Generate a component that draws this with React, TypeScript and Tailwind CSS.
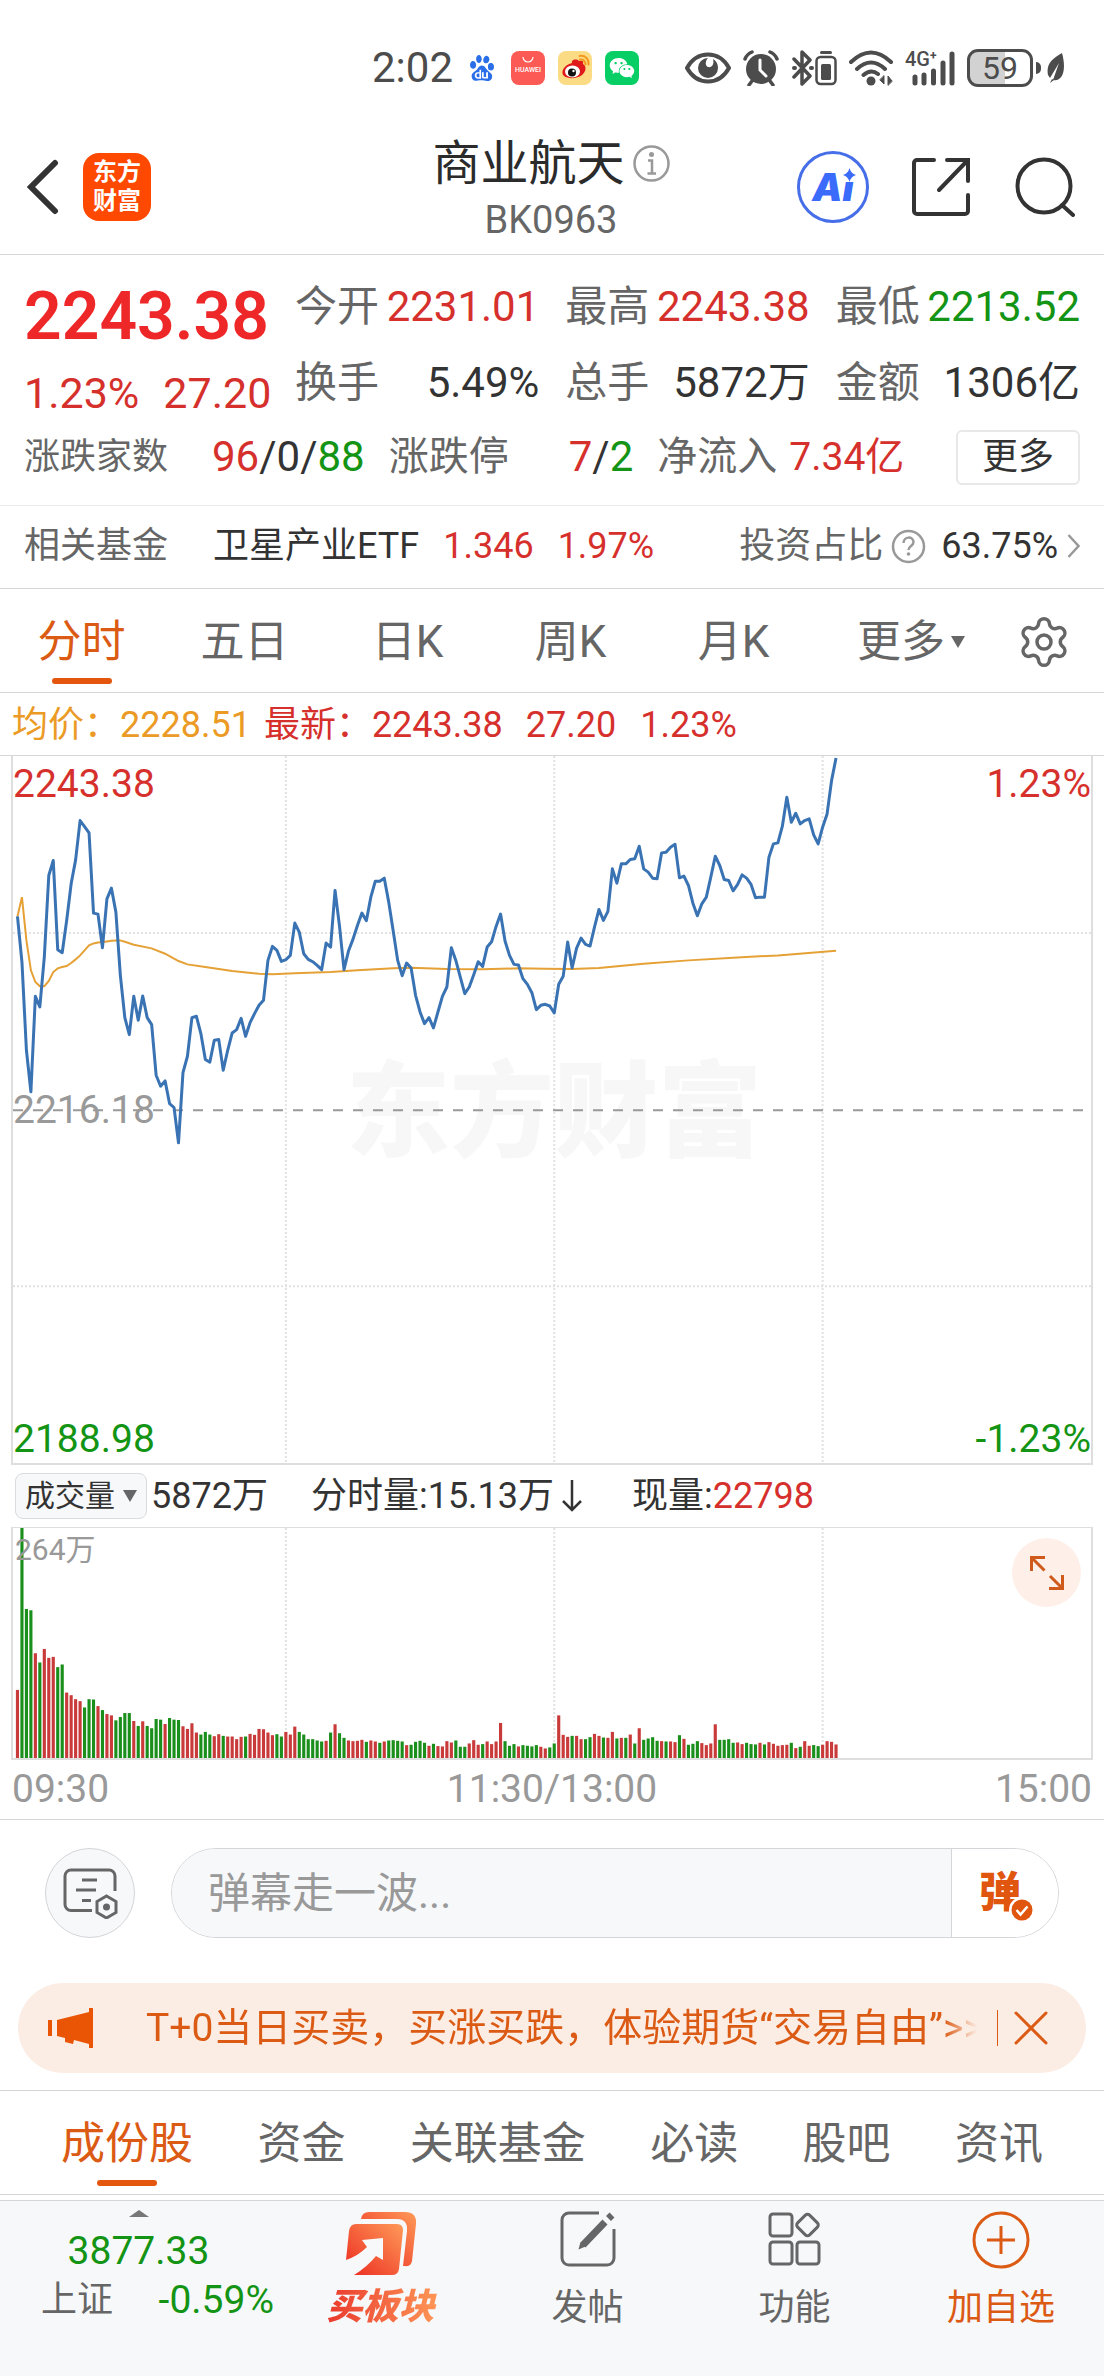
import type { ReactNode } from "react";
import { SiBaidu } from "react-icons/si";
import { AiFillWechat } from "react-icons/ai";
import { Settings } from "lucide-react";

/* One sample per trading minute; the vertical axis runs from 46 (day high) to 2170 (day low limit). */
const PRICE = [
  528, 665, 930, 1055, 768, 800, 650, 405, 360, 628, 637, 540, 430, 358, 240, 258, 277, 518, 521, 622,
  475, 443, 515, 705, 832, 883, 768, 840, 767, 832, 853, 1005, 1038, 1022, 1090, 1102, 1208, 997, 948, 832,
  828, 880, 958, 966, 900, 898, 990, 930, 878, 868, 834, 888, 847, 820, 795, 780, 660, 618, 630, 663,
  658, 645, 548, 575, 640, 657, 664, 675, 688, 608, 620, 450, 558, 688, 632, 597, 555, 518, 541, 470,
  422, 422, 413, 485, 572, 660, 706, 668, 683, 765, 815, 850, 832, 863, 815, 768, 740, 622, 660, 710,
  760, 740, 703, 664, 678, 620, 604, 558, 521, 602, 645, 672, 674, 715, 732, 757, 808, 795, 792, 797,
  818, 732, 708, 605, 683, 623, 593, 612, 617, 560, 507, 540, 513, 385, 428, 370, 370, 357, 355, 317,
  385, 395, 413, 415, 337, 335, 320, 311, 412, 407, 435, 488, 526, 490, 470, 410, 347, 375, 417, 420,
  451, 432, 403, 413, 432, 472, 470, 470, 350, 310, 307, 257, 170, 245, 218, 250, 240, 235, 283, 310,
  260, 220, 120, 52,
];

const AVERAGE: [number, number][] = [
  [0, 528], [1, 470], [2, 600], [3, 690], [4, 725], [5, 738], [6, 738], [7, 722], [8, 695], [9, 684],
  [10, 680], [11, 677], [12, 668], [13, 657], [14, 645], [15, 630], [16, 615], [17, 609], [18, 606],
  [19, 605], [20, 603], [21, 601], [22, 600], [23, 600], [24, 604], [26, 613], [30, 624], [33, 640],
  [36, 662], [38, 672], [42, 680], [48, 692], [54, 700], [57, 702], [62, 699], [70, 695], [76, 690],
  [84, 684], [88, 682], [96, 686], [104, 687], [112, 684], [118, 685], [124, 686], [130, 683],
  [140, 670], [150, 660], [160, 652], [170, 645], [183, 631],
];

/* Top edge of each volume bar above a base of 1018; negative marks a falling minute. */
const VOLUME = [
  812, -322, -567, -571, 701, -729, 688, 715, 712, -743, -735, 820, 828, 840, 846, -865, -840, -841, 861, -873,
  885, 889, -904, -894, -882, -882, 906, -921, 907, -921, -928, -900, -902, 915, -897, -902, -903, 922, 930, 913,
  941, -947, -939, -947, 952, 946, -951, 953, 953, 961, 954, -953, 945, 948, 930, 931, 941, 949, -946, -953,
  939, 947, 923, -939, -947, -961, -961, -965, -968, 966, -941, 916, -943, -957, 965, 967, 966, 963, -969, 965,
  968, -972, 968, -965, -964, -966, -968, 979, -978, -969, -966, -972, 981, -975, 982, 983, 967, 971, -965, -984,
  -984, 974, 964, 978, -976, 968, 976, 968, 912, -967, -981, -976, 983, -979, -981, -983, -979, 984, 989, -986,
  -974, 889, 948, 954, -951, 951, 961, -961, -955, 945, 951, -956, 957, 939, -959, 957, -957, 947, -974, 928,
  -963, -959, -955, -966, 967, -968, 968, 970, -949, 960, -978, -975, -967, 973, 979, 974, 916, -963, -963, -961,
  -972, 971, 976, -972, -976, -977, 972, -977, 970, 975, 981, 979, 978, -972, 988, -984, 967, 981, -979, -982,
  978, 967, 969, 977,
];
const VOLUME_BASE = 1018;

const RED = "text-[#d6302d]";
const GREEN = "text-[#149414]";

function StatusBar() {
  return (
    <div className="flex h-[104px] items-center justify-end pt-8 pr-[39px] text-[#4c4c4c]">
      <span className="text-[42px] leading-none">2:02</span>
      <SiBaidu className="ml-4 size-[26px] text-[#2a6fe8]" />
      <div className="ml-4 flex size-[34px] flex-col items-center rounded-lg bg-[#fb5a55] pt-[5px] text-white">
        <svg width="12" height="7" viewBox="0 0 12 7" fill="none" stroke="currentColor" strokeWidth="1.2">
          <path d="M1 1a5 5 0 0 0 10 0" />
        </svg>
        <span className="mt-1 text-[7px] leading-none font-medium">HUAWEI</span>
      </div>
      <svg className="ml-[13px] size-[34px]" viewBox="0 0 34 34">
        <rect width="34" height="34" rx="8" fill="#fbdc84" />
        <path d="M14 12c-1-3 4-5 7-2 3-1 5 0 4 3 4 2 3 8-1 11-5 4-14 4-18 1-4-4 0-11 8-13z" fill="#e01a1a" />
        <ellipse cx="14.500" cy="20.500" rx="7.500" ry="6" fill="#fff" />
        <circle cx="14" cy="21.500" r="4" fill="#111" />
        <circle cx="15.500" cy="20" r="1.200" fill="#fff" />
        <path d="M22 8.500c3-.5 5.500 1.500 5.500 5M21.500 5c5.500-1 9.500 3 9 8.500" fill="none" stroke="#f49a1f" strokeWidth="2" strokeLinecap="round" />
      </svg>
      <div className="ml-[13px] flex size-[34px] items-center justify-center rounded-lg bg-[#08ce66]">
        <AiFillWechat className="size-7 text-white" />
      </div>
      <svg className="ml-[46px] h-8 w-[46px]" viewBox="0 0 46 32">
        <path d="M2 16C12 -2 34 -2 44 16C34 34 12 34 2 16z" fill="none" stroke="currentColor" strokeWidth="4" strokeLinejoin="round" />
        <path d="M23 6a10 10 0 1 0 10 10c0-4-2-7.500-5-9c1.500 5-1 9-5 8c-3-1-3-6 0-9z" fill="currentColor" />
      </svg>
      <svg className="ml-3 size-9" viewBox="0 0 36 36" fill="none" stroke="currentColor">
        <circle cx="18" cy="19" r="15" fill="currentColor" stroke="none" />
        <path d="M2 9q2-5 7-7M34 9q-2-5-7-7M9 31l-3 4M27 31l3 4" strokeWidth="3.500" strokeLinecap="round" />
        <path d="M17 10v10l6 6" stroke="#fff" strokeWidth="3" strokeLinecap="round" />
      </svg>
      <svg className="ml-3 h-9 w-6" viewBox="0 0 24 36" fill="none" stroke="currentColor" strokeWidth="3.500" strokeLinejoin="round" strokeLinecap="round">
        <path d="m3 9 16 17-8 8V2l8 8L3 27" />
        <path d="M3 18h1M20 18h1" strokeWidth="4" />
      </svg>
      <svg className="h-9 w-[22px]" viewBox="0 0 22 36">
        <rect x="5" y="1" width="12" height="3" rx="1.500" fill="currentColor" />
        <rect x="1.500" y="7" width="19" height="27" rx="4" fill="none" stroke="currentColor" strokeWidth="2.500" />
        <rect x="6" y="14" width="10" height="16" rx="1.500" fill="currentColor" />
      </svg>
      <svg className="ml-3 h-9 w-11" viewBox="0 0 44 36" fill="none" stroke="currentColor" strokeWidth="4" strokeLinecap="round">
        <path d="M2 12Q22 -7 42 12M8 19Q22 6 36 19M14.500 25Q22 18.500 29 24" />
        <circle cx="22" cy="31" r="4.500" fill="currentColor" stroke="none" />
        <path d="M35 26v8l-4-4zM39 35v-9l4 5z" fill="currentColor" strokeWidth="1" />
      </svg>
      <div className="relative ml-3 h-9 w-[50px]">
        <svg className="size-full" viewBox="0 0 50 36" stroke="currentColor" strokeWidth="5" strokeLinecap="round">
          <path d="M10 33v-6M19 33v-8M28.500 33v-12M38 33v-20M47 33V4" />
        </svg>
        <span className="absolute top-0 left-0 text-[20px] leading-[18px] font-medium">4G<sup className="text-xs font-bold">+</sup></span>
      </div>
      <div className="ml-3 flex h-[38px] w-[66px] items-center justify-center rounded-[11px] border-[3px] border-current bg-[linear-gradient(90deg,#d2d2d2_59%,#fff_59%)] text-[32px] leading-none">
        59
      </div>
      <span className="ml-[3px] h-3 w-[5px] rounded-r-md bg-current" />
      <svg className="ml-[6px] h-[30px] w-[18px]" viewBox="0 0 18 30" fill="currentColor">
        <path d="M15 0C4 6-1 12 1 22l2 3L12 10 6 27c9 2 14-9 9-27zM5 26l-2 4 4-3z" />
      </svg>
    </div>
  );
}

function Header() {
  return (
    <header className="grid h-[151px] grid-cols-[1fr_auto_1fr] items-center border-b border-[#d6d6d6] pt-4 pr-[29px] pl-[27px]">
      <div className="flex items-center">
        <button aria-label="返回" className="w-14 text-[#333]">
          <svg width="32" height="56" viewBox="0 0 32 56" fill="none" stroke="currentColor" strokeWidth="6" strokeLinecap="round" strokeLinejoin="miter">
            <path d="M28 4 4 28l24 24" />
          </svg>
        </button>
        <div className="flex size-[68px] flex-col items-center justify-center rounded-2xl bg-[#ff4800] text-[24px] leading-[29px] font-bold text-white">
          <span>东方</span>
          <span>财富</span>
        </div>
      </div>
      <div className="flex flex-col items-center pt-[5px]">
        <div className="flex items-center gap-2">
          <h1 className="text-[48px] leading-[56px] text-[#2b2b2b]">商业航天</h1>
          <button aria-label="说明" className="text-[#999]">
            <svg width="37" height="37" viewBox="0 0 37 37" fill="none" stroke="currentColor" strokeWidth="2.500">
              <circle cx="18.500" cy="18.500" r="17" />
              <circle cx="18.500" cy="9.500" r="2.500" fill="currentColor" stroke="none" />
              <path d="M15 15.500h4v13M14.500 28.500h8.500" />
            </svg>
          </button>
        </div>
        <span className="mt-1 text-[38px] leading-[48px] text-[#666]">BK0963</span>
      </div>
      <div className="flex items-center justify-end text-[#333]">
        <button aria-label="AI 助手" className="relative flex size-[72px] items-center justify-center rounded-full border-[3px] border-[#456ee8] font-[Inter] text-[38px] leading-none font-black text-[#3a6bfb] italic">
          Ai
          <svg className="absolute top-[14px] right-[10px] bg-white" width="13" height="14" viewBox="0 0 13 14" fill="currentColor">
            <path d="M6.500 0Q8 5.500 13 7 8 8.500 6.500 14 5 8.500 0 7 5 5.500 6.500 0z" />
          </svg>
        </button>
        <button aria-label="分享" className="ml-[43px]">
          <svg width="58" height="58" viewBox="0 0 58 58" fill="none" stroke="currentColor" strokeWidth="4" strokeLinecap="round">
            <path d="M22 2H5a3 3 0 0 0-3 3v48a3 3 0 0 0 3 3h48a3 3 0 0 0 3-3V37M35 2h21v21M55 3 27 32" />
          </svg>
        </button>
        <button aria-label="搜索" className="ml-[45px]">
          <svg width="60" height="60" viewBox="0 0 60 60" fill="none" stroke="currentColor" strokeWidth="4" strokeLinecap="round">
            <circle cx="29" cy="29" r="26.500" />
            <path d="m47 48 11 10" />
          </svg>
        </button>
      </div>
    </header>
  );
}

function Stat({ label, children, tone = "text-[#333]" }: { label: string; children: ReactNode; tone?: string }) {
  return (
    <div className="flex h-[76px] items-center justify-between text-[42px] leading-none whitespace-nowrap">
      <dt className="text-[#666]">{label}</dt>
      <dd className={tone}>{children}</dd>
    </div>
  );
}

function Quote() {
  return (
    <section className="h-[251px] border-b border-[#ebebeb] px-6 pt-[14px]">
      <div className="flex h-[152px]">
        <div className="w-[271px] pt-3">
          <div className="text-[66px] leading-[72px] font-semibold text-[#ee2828]">2243.38</div>
          <div className={`mt-2 flex gap-6 text-[43px] leading-[64px] ${RED}`}>
            <span>1.23%</span>
            <span>27.20</span>
          </div>
        </div>
        <dl className="grid flex-1 grid-cols-3 gap-x-[26px]">
          <Stat label="今开" tone={RED}>2231.01</Stat>
          <Stat label="最高" tone={RED}>2243.38</Stat>
          <Stat label="最低" tone={GREEN}>2213.52</Stat>
          <Stat label="换手">5.49%</Stat>
          <Stat label="总手">5872万</Stat>
          <Stat label="金额">1306亿</Stat>
        </dl>
      </div>
      <div className="flex h-[72px] items-center text-[40px] leading-none whitespace-nowrap text-[#666]">
        <span className="text-[36px]">涨跌家数</span>
        <span className="ml-11 text-[42px] text-[#333]">
          <span className={RED}>96</span>/0/<span className={GREEN}>88</span>
        </span>
        <span className="ml-6">涨跌停</span>
        <span className="ml-[60px] text-[42px] text-[#333]">
          <span className={RED}>7</span>/<span className={GREEN}>2</span>
        </span>
        <span className="ml-6">净流入</span>
        <span className={`ml-3 text-[39px] ${RED}`}>7.34亿</span>
        <button className="ml-auto h-[55px] w-[124px] rounded-md border-2 border-[#e8e8e8] text-[36px] leading-none text-[#333]">更多</button>
      </div>
    </section>
  );
}

function RelatedFund() {
  return (
    <a href="#fund" className="flex h-[83px] items-center border-b border-[#d6d6d6] px-6 pb-[2px] text-[36px] leading-none whitespace-nowrap text-[#666]">
      <span>相关基金</span>
      <span className="ml-[45px] text-[#333]">卫星产业ETF</span>
      <span className={`ml-6 ${RED}`}>1.346</span>
      <span className={`ml-6 ${RED}`}>1.97%</span>
      <span className="ml-auto">投资占比</span>
      <svg className="ml-2 text-[#999]" width="35" height="35" viewBox="0 0 35 35" fill="none" stroke="currentColor" strokeWidth="2.500">
        <circle cx="17.500" cy="17.500" r="15.500" />
        <path d="M12.500 14c0-7 10-7 10-1 0 4-5 4-5 8" />
        <circle cx="17.500" cy="25" r="1.800" fill="currentColor" stroke="none" />
      </svg>
      <span className="ml-[15px] text-[#333]">63.75%</span>
      <svg className="ml-[9px] text-[#999]" width="13" height="24" viewBox="0 0 13 24" fill="none" stroke="currentColor" strokeWidth="2.500">
        <path d="m1.500 1 10 11-10 11" />
      </svg>
    </a>
  );
}

function PeriodTabs() {
  return (
    <nav className="grid h-[104px] grid-cols-[163fr_163fr_163fr_163fr_163fr_192fr_73fr] border-b border-[#d6d6d6] pt-[2px] pr-6 text-[44px] leading-none text-[#666]">
      <button className="relative text-[#db5a14]">
        分时
        <span className="absolute bottom-2 left-1/2 h-[6px] w-[60px] -translate-x-1/2 rounded-full bg-[#e4560d]" />
      </button>
      {["五日", "日K", "周K", "月K"].map((label) => (
        <button key={label}>{label}</button>
      ))}
      <button className="flex items-center justify-center gap-[6px]">
        更多
        <svg width="14" height="12" viewBox="0 0 14 12" fill="currentColor">
          <path d="M0 0h14L7 12z" />
        </svg>
      </button>
      <button aria-label="设置" className="flex items-center justify-center">
        <Settings className="size-[56px] shrink-0" strokeWidth={1.5} />
      </button>
    </nav>
  );
}

function Grid({ top, height }: { top: number; height: number }) {
  return (
    <g stroke="#e2e2e2" strokeWidth="2" strokeDasharray="2 2">
      {[61, 121, 181].map((x) => (
        <path key={x} d={`M${x} ${top}v${height}`} vectorEffect="non-scaling-stroke" />
      ))}
    </g>
  );
}

function PriceChart() {
  return (
    <section>
      <div className="flex h-[63px] items-center border-b border-[#d6d6d6] pt-[2px] pl-3 text-[36px] leading-none whitespace-nowrap">
        <span className="text-[#eb9b25]">均价：2228.51</span>
        <span className={`ml-[13px] ${RED}`}>最新：2243.38</span>
        <span className={`ml-[23px] ${RED}`}>27.20</span>
        <span className={`ml-6 ${RED}`}>1.23%</span>
      </div>
      <div className="relative mx-[11px] border-x-2 border-b-2 border-[#dedede] text-[39px] leading-none">
        <div className="absolute inset-0 flex items-center justify-center pt-2 pl-1 text-[104px] leading-none font-black text-[#f7f7f7]">东方财富</div>
        <svg className="relative block h-[707px] w-full overflow-visible" viewBox="0 46 241 2124" preserveAspectRatio="none" fill="none">
          <Grid top={46} height={2124} />
          <path d="M0 578H241M0 1639H241" stroke="#e2e2e2" strokeWidth="2" strokeDasharray="2 2" vectorEffect="non-scaling-stroke" />
          <path d="M0 1110H241" stroke="#999" strokeWidth="2" strokeDasharray="10 10" vectorEffect="non-scaling-stroke" />
          <polyline points={AVERAGE.map(([i, y]) => `${i + 1},${y}`).join(" ")} stroke="#e5a136" strokeWidth="2" vectorEffect="non-scaling-stroke" />
          <polyline points={PRICE.map((y, i) => `${i + 1},${y}`).join(" ")} stroke="#3a73b3" strokeWidth="3" strokeLinejoin="round" vectorEffect="non-scaling-stroke" />
        </svg>
        <span className={`absolute top-[9px] left-0 ${RED}`}>2243.38</span>
        <span className={`absolute top-[9px] right-0 ${RED}`}>1.23%</span>
        <span className="absolute top-1/2 left-0 -translate-y-1/2 text-[#999]">2216.18</span>
        <span className={`absolute bottom-1 left-0 ${GREEN}`}>2188.98</span>
        <span className={`absolute right-0 bottom-1 ${GREEN}`}>-1.23%</span>
      </div>
    </section>
  );
}

function VolumeChart() {
  return (
    <section className="border-b border-[#d6d6d6]">
      <div className="flex h-[62px] items-center pl-[15px] text-[36px] leading-none whitespace-nowrap text-[#333]">
        <button className="flex h-[46px] w-[132px] items-center justify-center gap-2 rounded-lg border border-[#d9dbdf] bg-[#f7f8fa] text-[30px] leading-none">
          成交量
          <svg className="text-[#666]" width="14" height="12" viewBox="0 0 14 12" fill="currentColor">
            <path d="M0 0h14L7 12z" />
          </svg>
        </button>
        <span className="ml-1">5872万</span>
        <span className="ml-[43px]">分时量:15.13万</span>
        <svg className="ml-2" width="20" height="32" viewBox="0 0 20 32" fill="none" stroke="currentColor" strokeWidth="2.500">
          <path d="M10 0v30M1 21l9 9 9-9" />
        </svg>
        <span className="ml-[50px]">
          现量:<span className={RED}>22798</span>
        </span>
      </div>
      <div className="relative mx-[11px] border-2 border-t border-[#dedede]">
        <svg className="block h-[230px] w-full" viewBox="0 322 241 696" preserveAspectRatio="none">
          <Grid top={322} height={696} />
          {VOLUME.map((v, i) => (
            <rect key={i} x={i + 0.65} y={Math.abs(v)} width={0.7} height={VOLUME_BASE - Math.abs(v)} fill={v > 0 ? "#c93a3a" : "#1b8f1b"} />
          ))}
        </svg>
        <span className="absolute top-[7px] left-[2px] text-[30px] leading-none text-[#999]">264万</span>
        <button aria-label="全屏" className="absolute top-[10px] right-[10px] flex size-[69px] items-center justify-center rounded-full bg-[#fef0e9] text-[#cf5a1c]">
          <svg width="34" height="34" viewBox="0 0 34 34" fill="none" stroke="currentColor" strokeWidth="3">
            <path d="M1.500 15V1.500H15M2 2l12.500 12.500M32.500 19v13.500H19M32 32 20 20" />
          </svg>
        </button>
      </div>
      <div className="grid h-[59px] grid-cols-3 items-center px-3 text-[39px] leading-none text-[#999]">
        <span>09:30</span>
        <span className="text-center">11:30/13:00</span>
        <span className="text-right">15:00</span>
      </div>
    </section>
  );
}

function BulletScreen() {
  return (
    <section className="flex gap-9 pt-7 pr-[45px] pb-[45px] pl-[45px]">
      <button aria-label="弹幕设置" className="flex size-[90px] items-center justify-center rounded-full border border-[#d3d5d9] bg-[#f7f8fa] text-[#666]">
        <svg width="56" height="52" viewBox="0 0 56 52" fill="none" stroke="currentColor" strokeWidth="3">
          <path d="M30 43.500H9a6 6 0 0 1-6-6V9a6 6 0 0 1 6-6h38a6 6 0 0 1 6 6v15M20 13h15M14 23h20M20 33.500h9" strokeLinejoin="round" />
          <path d="m44.500 29 9.500 5.500v11L44.500 51 35 45.500v-11z" />
          <circle cx="44.500" cy="40" r="3.500" fill="currentColor" stroke="none" />
        </svg>
      </button>
      <div className="flex h-[90px] flex-1 overflow-hidden rounded-full border border-[#d3d5d9]">
        <input aria-label="弹幕" placeholder="弹幕走一波..." className="min-w-0 flex-1 bg-[#f7f8fa] pl-9 text-[42px] leading-none outline-none placeholder:text-[#999]" />
        <button aria-label="弹幕开关" className="relative w-[107px] border-l border-[#d3d5d9] bg-white pr-[10px] text-[42px] leading-none font-black text-[#e1560f]">
          弹
          <svg className="absolute top-[48px] left-[57px]" width="26" height="26" viewBox="0 0 26 26">
            <circle cx="13" cy="13" r="13" fill="#fff" />
            <circle cx="13" cy="13" r="10.500" fill="#e1560f" />
            <path d="m7.500 13 4 4.500 7-8" fill="none" stroke="#fff" strokeWidth="2.500" />
          </svg>
        </button>
      </div>
    </section>
  );
}

function PromoBanner() {
  return (
    <section className="mx-[18px] mb-[17px] flex h-[90px] items-center rounded-full bg-[#fcede4] pr-[38px] pl-[30px] text-[#db5a14]">
      <svg width="46" height="40" viewBox="0 0 46 40" fill="#e95504">
        <path d="M0 12h4v16H0zM9 12 41 4V0h4v40h-4v-4l-15-4-1 4-8-2v-4l-8-2z" />
      </svg>
      <a href="#promo" className="ml-[52px] min-w-0 flex-1 overflow-hidden text-[39px] leading-[56px] whitespace-nowrap [mask-image:linear-gradient(90deg,#000_96%,transparent)]">
        T+0当日买卖，买涨买跌，体验期货“交易自由”&gt;&gt;
      </a>
      <span className="ml-5 h-9 w-px bg-current" />
      <button aria-label="关闭" className="ml-4">
        <svg width="34" height="34" viewBox="0 0 34 34" fill="none" stroke="currentColor" strokeWidth="3" strokeLinecap="round">
          <path d="m2 2 30 30M32 2 2 32" />
        </svg>
      </button>
    </section>
  );
}

function ContentTabs() {
  return (
    <nav className="flex h-[105px] justify-between border-y border-[#d3d5d9] px-[61px] pt-[2px] text-[44px] leading-none whitespace-nowrap text-[#666]">
      <button className="relative text-[#db5a14]">
        成份股
        <span className="absolute bottom-2 left-1/2 h-[6px] w-[60px] -translate-x-1/2 rounded-full bg-[#e4560d]" />
      </button>
      {["资金", "关联基金", "必读", "股吧", "资讯"].map((label) => (
        <button key={label}>{label}</button>
      ))}
    </nav>
  );
}

function BottomBar() {
  const action = "flex flex-col items-center pt-[10px] text-[36px] leading-[48px]";
  return (
    <footer className="mt-[5px] grid h-[176px] grid-cols-[277fr_207fr_207fr_207fr_206fr] border-t border-[#d3d5d9] bg-[#f7f8fa] text-[#666]">
      <button className="flex flex-col items-center pt-[9px]">
        <svg width="20" height="7" viewBox="0 0 20 7" fill="#777">
          <path d="m10 0 10 7H0z" />
        </svg>
        <span className={`mt-[10px] text-[39px] leading-[48px] ${GREEN}`}>3877.33</span>
        <span className="flex w-full items-center justify-between pr-[3px] pl-[41px] text-[36px] leading-[50px]">
          上证
          <span className={`text-[39px] ${GREEN}`}>-0.59%</span>
        </span>
      </button>
      <button className={action}>
        <svg width="72" height="66" viewBox="0 0 72 66">
          <defs>
            <linearGradient id="flame" x1="0" y1="1" x2="1" y2="0">
              <stop offset="0" stopColor="#eb2a20" />
              <stop offset="1" stopColor="#ff9a58" />
            </linearGradient>
          </defs>
          <path d="M16 8q1-7 8-7h36q12 0 11 12l-4 37q-1 6-7 5h-2l4-35q1-12-10-12z" fill="url(#flame)" />
          <path d="M11 13h41q6 0 6 6l-4 39q-1 6-7 6H9q13-8 22-19l7 4V27l-21 2 5 7Q13 45 1 49l3-29q1-7 7-7z" fill="url(#flame)" />
        </svg>
        <span className="mt-[6px] bg-[linear-gradient(90deg,#e8322a,#ff9a58)] bg-clip-text px-2 text-[36px] leading-[48px] font-black text-transparent italic">买板块</span>
      </button>
      <button className={action}>
        <svg width="56" height="56" viewBox="0 0 56 56" fill="none" stroke="currentColor" strokeWidth="3">
          <path d="M39 2H9a7 7 0 0 0-7 7v38a7 7 0 0 0 7 7h38a7 7 0 0 0 7-7V18" />
          <path d="M45 11 23 34M48.500 7.500 52 4" strokeWidth="7" />
          <path d="m20.500 31-2 7.500 7-3z" fill="currentColor" stroke="none" />
        </svg>
        <span className="mt-[17px]">发帖</span>
      </button>
      <button className={action}>
        <svg width="54" height="56" viewBox="0 0 54 56" fill="none" stroke="currentColor" strokeWidth="3">
          <rect x="2" y="3" width="22" height="22" rx="3" />
          <rect x="2" y="31" width="22" height="22" rx="3" />
          <rect x="29" y="31" width="22" height="22" rx="3" />
          <rect x="31" y="5.500" width="17" height="17" rx="3" transform="rotate(45 39.500 14)" />
        </svg>
        <span className="mt-[17px]">功能</span>
      </button>
      <button className={`${action} text-[#db5a14]`}>
        <svg width="58" height="58" viewBox="0 0 58 58" fill="none" stroke="currentColor" strokeWidth="3">
          <circle cx="29" cy="29" r="27" />
          <path d="M29 15v28M15 29h28" />
        </svg>
        <span className="mt-[15px]">加自选</span>
      </button>
    </footer>
  );
}

export default function App() {
  return (
    <main className="w-full overflow-hidden bg-white font-[Roboto,'Noto_Sans_CJK_SC',sans-serif]">
      <StatusBar />
      <Header />
      <Quote />
      <RelatedFund />
      <PeriodTabs />
      <PriceChart />
      <VolumeChart />
      <BulletScreen />
      <PromoBanner />
      <ContentTabs />
      <BottomBar />
    </main>
  );
}
